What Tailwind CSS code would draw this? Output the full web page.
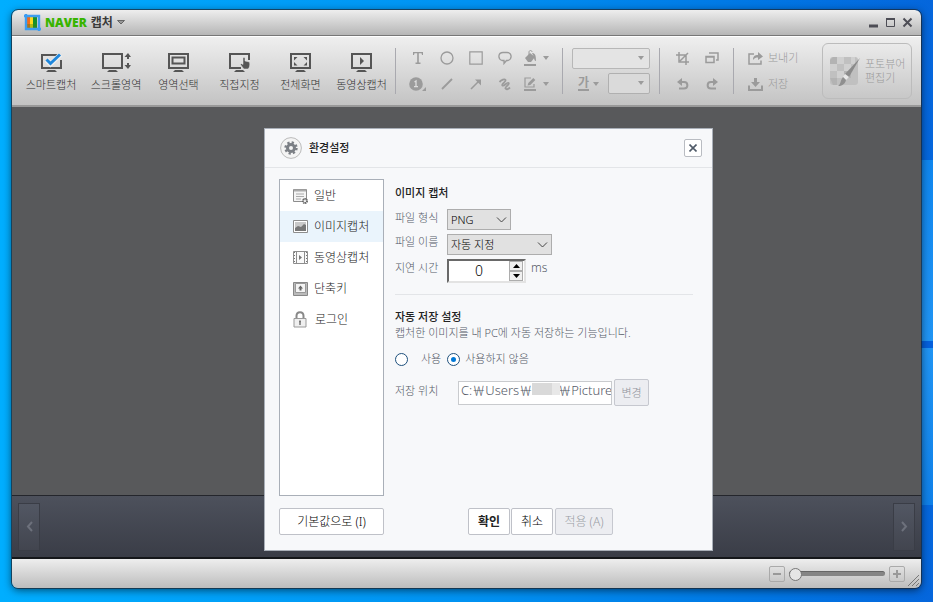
<!DOCTYPE html>
<html lang="ko">
<head>
  <meta charset="UTF-8" />
  <title>NAVER 캡처</title>
  <meta name="viewport" content="width=device-width, initial-scale=1.0" />
  <script src="https://cdn.jsdelivr.net/npm/@tailwindcss/browser@4"></script>
</head>
<body class="relative min-h-screen flex flex-col px-3 pt-2.5 pb-3.5 bg-linear-to-r from-[#00aeff] via-[#0092f2] to-[#0566dc] font-['Noto_Sans','Noto_Sans_CJK_KR',sans-serif] font-light text-[11px] leading-4">

  <!-- light beams of the wallpaper -->
  <div class="absolute right-0 top-0 bottom-0 w-6 flex flex-col">
    <div class="h-[160px]"></div>
    <div class="h-[181px] bg-linear-to-b from-[#0f86ee] to-[#2094f3]"></div>
    <div class="h-[7px] bg-[#0560dc]"></div>
    <div class="h-[157px] bg-linear-to-b from-[#2094f3] to-[#0f80e8]"></div>
  </div>

  <div class="relative flex-1 flex flex-col rounded-md shadow-[0_2px_8px_rgba(0,0,0,0.6)] outline outline-[#1c2a38]/70">

    <!-- title bar -->
    <header class="h-[26px] flex items-center pl-3 pr-2 rounded-t-md bg-linear-to-b from-[#eeeeee] to-[#b6b6b6] border-b border-[#777777]">
      <svg class="mr-1" width="17" height="17" viewBox="0 0 17 17">
        <rect x="3" y="3" width="4" height="11" fill="#f26a1b"/><rect x="6" y="3" width="4" height="11" fill="#ffd91c"/><rect x="9" y="3" width="4" height="11" fill="#16902b"/>
        <path d="M3 10h10v4H3z" fill="#3f8a10" opacity=".4"/>
        <path d="M2 0v15h15M0 2h15v15" fill="none" stroke="#3d9df0" stroke-width="2.4"/>
      </svg>
      <h1 class="flex items-center gap-1 text-xs">
        <span class="font-['Open_Sans',sans-serif] font-extrabold text-[#37b400]">NAVER</span>
        <span class="font-bold text-[#3a3a3a]">캡처</span>
      </h1>
      <button aria-label="메뉴" class="ml-1"><svg width="8" height="5" viewBox="0 0 8 5"><path d="M.5.5h7L4 4z" fill="#999" stroke="#666"/></svg></button>
      <div class="ml-auto flex items-center gap-1.5 text-[#4d4d55]">
        <button aria-label="최소화"><svg width="11" height="11" viewBox="0 0 11 11"><path d="M1 9h9" stroke="currentColor" stroke-width="3"/></svg></button>
        <button aria-label="최대화"><svg width="11" height="11" viewBox="0 0 11 11"><path d="M1.500 1v8.500h8V1" fill="none" stroke="currentColor"/><path d="M1 2h9" stroke="currentColor" stroke-width="2"/></svg></button>
        <button aria-label="닫기"><svg width="11" height="11" viewBox="0 0 11 11"><path d="M1.500 1.500l8 8M9.500 1.500l-8 8" stroke="currentColor" stroke-width="2"/></svg></button>
      </div>
    </header>

    <!-- toolbar -->
    <nav class="h-[71px] flex items-center pl-1.5 pr-[9px] bg-linear-to-b from-[#efefef] to-[#c3c3c3] border-t border-t-white border-b-2 border-b-[#999999]">
      <div class="flex pt-0.5 text-[#333333]">
        <button class="w-[66px] flex flex-col items-center gap-1">
          <svg width="23" height="21" viewBox="0 0 23 21" fill="none"><path d="M20 3H2v13h19V8" stroke="#555" stroke-width="2"/><path d="M6 20l2-2h7l2 2z" fill="#555"/><path d="M6.500 8l4 4 10-9.500" stroke="#eee" stroke-width="5"/><path d="M6.500 7.500l4 4L20 2.500" stroke="#1f87dc" stroke-width="3"/></svg>
          <span>스마트캡처</span>
        </button>
        <button class="w-16 flex flex-col items-center gap-1">
          <svg width="29" height="21" viewBox="0 0 29 21" fill="none"><path d="M1 2h19v14H1z" stroke="#555" stroke-width="2"/><path d="M5 20l2-2h7l2 2z" fill="#555"/><path d="M26 3v4M26 11v4" stroke="#555" stroke-width="2"/><path d="M22.500 5L26 1l3 4zM22.500 13L26 17l3-4z" fill="#555"/></svg>
          <span>스크롤영역</span>
        </button>
        <button class="w-[61px] flex flex-col items-center gap-1">
          <svg width="21" height="21" viewBox="0 0 21 21" fill="none"><path d="M1 2h19v14H1z" stroke="#555" stroke-width="2"/><path d="M4.500 5.500h12v6h-12z" stroke="#555" stroke-width="2"/><path d="M5 20l2-2h7l2 2z" fill="#555"/></svg>
          <span>영역선택</span>
        </button>
        <button class="w-[61px] flex flex-col items-center gap-1">
          <svg width="21" height="21" viewBox="0 0 21 21" fill="none"><path d="M20 8V2H1v14h11" stroke="#555" stroke-width="2"/><path d="M5 20l2-2h7l2 2z" fill="#555"/><path d="M14 6.500c0-1.500 2-1.500 2 0V9l4.500 1c.7 3 0 6-1.500 7h-4c-1-1-2-2.500-3.500-4.500 0-1.300 1.500-1 2.500 0z" fill="#555" stroke="#e4e4e4" stroke-width=".5"/></svg>
          <span>직접지정</span>
        </button>
        <button class="w-[61px] flex flex-col items-center gap-1">
          <svg width="21" height="21" viewBox="0 0 21 21" fill="none"><path d="M1 2h19v14H1z" stroke="#555" stroke-width="2"/><path d="M4 5h3.500L4 8.500zM17 5h-3.500L17 8.500zM4 13.500h3.500L4 10zM17 13.500h-3.500L17 10z" fill="#555"/><path d="M5 20l2-2h7l2 2z" fill="#555"/></svg>
          <span>전체화면</span>
        </button>
        <button class="w-[61px] flex flex-col items-center gap-1">
          <svg width="21" height="21" viewBox="0 0 21 21" fill="none"><path d="M1 2h19v14H1z" stroke="#555" stroke-width="2"/><path d="M9 5v8l4-4z" fill="#555"/><path d="M5 20l2-2h7l2 2z" fill="#555"/></svg>
          <span>동영상캡처</span>
        </button>
      </div>

      <div class="ml-[3px] w-px h-[46px] bg-[#a9a9af]"></div>

      <div class="ml-[7px] grid grid-cols-[repeat(4,29px)_35px] auto-rows-[26px] place-items-center text-[#9b9b9b]">
        <button disabled aria-label="텍스트"><svg width="12" height="12" viewBox="0 0 12 12"><path d="M1 0h10v3h-1L9.500 1.200H6.800V10.500h1.700V12h-5v-1.500h1.700V1.200H2.500L2 3H1z" fill="currentColor"/></svg></button>
        <button disabled aria-label="원"><svg width="14" height="14" viewBox="0 0 14 14" fill="none" stroke="currentColor" stroke-width="1.300"><circle cx="7" cy="7" r="6"/></svg></button>
        <button disabled aria-label="사각형"><svg width="14" height="14" viewBox="0 0 14 14" fill="none" stroke="currentColor" stroke-width="1.200"><path d="M.8.800h12.400v12.400H.8z"/></svg></button>
        <button disabled aria-label="말풍선"><svg width="14" height="14" viewBox="0 0 14 14" fill="none" stroke="currentColor" stroke-width="1.300"><path d="M4 9.500C-.5 8 0 1.500 5 1.500h4c5 0 5.500 6.500 1 8H8.500L6 12.500v-3z"/></svg></button>
        <button disabled aria-label="채우기" class="flex items-center gap-1.5"><svg width="13" height="16" viewBox="0 0 13 16"><path d="M1 8l5-5 5 4-4 5H4z" fill="currentColor"/><path d="M5 6V2c0-2 3-2 3 0" fill="none" stroke="currentColor"/><path d="M8 3c3 0 4 2 4 8-1.500 0-2-2-2-4z" fill="currentColor"/><path d="M0 15h12" stroke="currentColor" stroke-width="2"/></svg><svg width="6" height="4" viewBox="0 0 6 4"><path d="M0 0h6L3 4z" fill="currentColor"/></svg></button>
        <button disabled aria-label="번호"><svg width="17" height="14" viewBox="0 0 17 14"><circle cx="7" cy="7" r="6.800" fill="currentColor"/><path d="M5.500 5L7 4v5.500M5 9.700h4" fill="none" stroke="#ddd" stroke-width="1.300"/><path d="M17 10v4h-4z" fill="currentColor"/></svg></button>
        <button disabled aria-label="선"><svg width="12" height="12" viewBox="0 0 12 12"><path d="M1 11L11 1" stroke="currentColor" stroke-width="1.800"/></svg></button>
        <button disabled aria-label="화살표"><svg width="12" height="12" viewBox="0 0 12 12"><path d="M1 11l8-8" stroke="currentColor" stroke-width="1.600"/><path d="M5 1.500h6v6L9 5.500 7 3.500z" fill="currentColor"/></svg></button>
        <button disabled aria-label="자유선"><svg width="14" height="13" viewBox="0 0 14 13" fill="none" stroke="currentColor" stroke-width="1.800"><path d="M1.500 4C3.500 2 6.500.5 7.500 2S3 6 4.500 7.500 9 3.500 10.500 5 6.500 9 7.500 10.500s3 .5 4.500-1"/></svg></button>
        <button disabled aria-label="선 색" class="flex items-center gap-1.5"><svg width="13" height="14" viewBox="0 0 13 14"><path d="M7 1H1v9h9V7" fill="none" stroke="currentColor" stroke-width="1.200"/><path d="M3.500 8.500l.8-2.500 5-5 2 2-5 5z" fill="currentColor"/><path d="M0 13h12" stroke="currentColor" stroke-width="2"/></svg><svg width="6" height="4" viewBox="0 0 6 4"><path d="M0 0h6L3 4z" fill="currentColor"/></svg></button>
      </div>

      <div class="ml-2 w-px h-[46px] bg-[#a9a9af]"></div>

      <div class="ml-[9px] w-[78px] flex flex-col gap-1 text-[#9b9b9b]">
        <div class="relative">
          <select disabled aria-label="글꼴" class="block appearance-none w-full h-[21px] rounded-xs border border-[#b7b7b7] bg-[#e4e4e4]"><option></option></select>
          <svg class="absolute right-1.5 top-2" width="6" height="4" viewBox="0 0 6 4"><path d="M0 0h6L3 4z" fill="currentColor"/></svg>
        </div>
        <div class="flex items-center justify-between">
          <button disabled aria-label="글자 색" class="ml-1.5 flex items-center gap-1"><span class="border-b-2 leading-3 text-xs font-bold">가</span><svg width="6" height="4" viewBox="0 0 6 4"><path d="M0 0h6L3 4z" fill="currentColor"/></svg></button>
          <div class="relative">
            <select disabled aria-label="글자 크기" class="block appearance-none w-[42px] h-[21px] rounded-xs border border-[#b0b0b0] bg-[#dadada]"><option></option></select>
            <svg class="absolute right-1.5 top-2" width="6" height="4" viewBox="0 0 6 4"><path d="M0 0h6L3 4z" fill="currentColor"/></svg>
          </div>
        </div>
      </div>

      <div class="ml-[9px] w-px h-[46px] bg-[#a9a9af]"></div>

      <div class="ml-2 grid grid-cols-[29px_29px] auto-rows-[26px] place-items-center text-[#9b9b9b]">
        <button disabled aria-label="자르기"><svg width="13" height="13" viewBox="0 0 13 13" fill="none" stroke="currentColor" stroke-width="1.500"><path d="M3 0v10h10M0 3h10v10M4 9l8-8"/></svg></button>
        <button disabled aria-label="크기 조절"><svg width="14" height="12" viewBox="0 0 14 12" fill="none" stroke="currentColor" stroke-width="1.500"><path d="M1 4.500h8v6H1zM4 1h9v7h-2M1 5h8"/></svg></button>
        <button disabled aria-label="실행 취소"><svg width="12" height="12" viewBox="0 0 12 12"><path d="M3 4h4c4.500 0 4.500 6.500 0 6.500H2" fill="none" stroke="currentColor" stroke-width="2"/><path d="M5 0v8L0 4z" fill="currentColor"/></svg></button>
        <button disabled aria-label="다시 실행"><svg width="12" height="12" viewBox="0 0 12 12"><path d="M9 4H5C.5 4 .5 10.500 5 10.500h5" fill="none" stroke="currentColor" stroke-width="2"/><path d="M7 0v8l5-4z" fill="currentColor"/></svg></button>
      </div>

      <div class="ml-[7px] w-px h-[46px] bg-[#a9a9af]"></div>

      <div class="ml-3.5 grid auto-rows-[26px] text-[#9b9b9b]">
        <button disabled class="flex items-center gap-[5px]"><svg width="15" height="13" viewBox="0 0 15 13"><path d="M6 2H1v10h12V8.500" fill="none" stroke="currentColor" stroke-width="1.500"/><path d="M5 8c0-4 2-5 5-5V0l5 4.500L10 8V5.500C8 5.500 6.500 6 5 8z" fill="currentColor"/></svg>보내기</button>
        <button disabled class="flex items-center gap-[5px]"><svg width="15" height="13" viewBox="0 0 15 13"><path d="M1 7.500V12h13V7.500" fill="none" stroke="currentColor" stroke-width="2"/><path d="M6 0h3v4h3L7.500 9 3 4h3z" fill="currentColor"/></svg>저장</button>
      </div>

      <button disabled class="ml-auto w-[90px] h-14 flex items-center gap-1 pl-1.5 rounded-md border border-[#bcbcbc] text-left leading-3.5 text-[#9b9b9b]">
        <svg class="shrink-0" width="32" height="32" viewBox="0 0 32 32">
          <rect x="1" y="2" width="28" height="28" rx="3" fill="#c0c0c0"/>
          <path d="M8 2h7v7H8zM22 2h4v7h-4zM1 9h7v7H1zM15 9h7v7h-7zM8 16h7v7H8z" fill="#d0d0d0"/>
          <path d="M4 2h4v7H1V5zM15 16h7v7h-7zM1 23h7v7H4z" fill="#b3b3b3"/>
          <path d="M31 3L20 22l-4-3z" fill="#8b8b8b"/><path d="M16 19l4 3-3 3-3-3z" fill="#e8e8e8"/><path d="M14 22l3 3c-1 4-4 6-8 6 3-2 2-5 5-9z" fill="#8f8f8f"/>
        </svg>
        <span>포토뷰어<br />편집기</span>
      </button>
    </nav>

    <main class="flex-1 bg-[#58595b]"></main>

    <!-- thumbnail strip -->
    <section class="h-16 flex items-center justify-between px-1.5 border-t border-b-2 border-t-[#24262c] border-b-[#15171a] bg-linear-to-b from-[#4d515c] to-[#3a3d47]">
      <button disabled aria-label="이전" class="w-[22px] h-12 flex items-center justify-center border border-[#3a3d46] bg-linear-to-b from-[#525763] to-[#42454f]"><svg width="7" height="11" viewBox="0 0 7 11" fill="none" stroke="#6d717c" stroke-width="2"><path d="M6 1L2 5.500 6 10"/></svg></button>
      <button disabled aria-label="다음" class="w-[22px] h-12 flex items-center justify-center border border-[#3a3d46] bg-linear-to-b from-[#525763] to-[#42454f]"><svg width="7" height="11" viewBox="0 0 7 11" fill="none" stroke="#6d717c" stroke-width="2"><path d="M1 1l4 4.500L1 10"/></svg></button>
    </section>

    <!-- status bar -->
    <footer class="relative h-[29px] flex items-center justify-end gap-1 pr-4 rounded-b-md bg-linear-to-b from-[#eeeeee] to-[#bdbdbd]">
      <button disabled aria-label="축소" class="size-4 flex items-center justify-center rounded-xs border border-[#aaaaaa]"><svg width="8" height="8" viewBox="0 0 8 8"><path d="M0 4h8" stroke="#999" stroke-width="2"/></svg></button>
      <input type="range" min="0" max="100" value="0" aria-label="확대 비율" class="appearance-none w-24 h-[5px] rounded-full bg-[#858585] border-t border-[#666666] [&::-webkit-slider-thumb]:appearance-none [&::-webkit-slider-thumb]:size-[13px] [&::-webkit-slider-thumb]:rounded-full [&::-webkit-slider-thumb]:border [&::-webkit-slider-thumb]:border-[#777777] [&::-webkit-slider-thumb]:bg-[#e6e6e6]" />
      <button disabled aria-label="확대" class="size-4 flex items-center justify-center rounded-xs border border-[#aaaaaa]"><svg width="8" height="8" viewBox="0 0 8 8"><path d="M0 4h8M4 0v8" stroke="#999" stroke-width="2"/></svg></button>
      <svg class="absolute right-0.5 bottom-0.5" width="11" height="11" viewBox="0 0 11 11" stroke="#777" fill="none"><path d="M0 11L11 0M4 11l7-7M8 11l3-3"/></svg>
    </footer>

    <!-- settings dialog -->
    <div role="dialog" aria-labelledby="dialogTitle" class="absolute left-[252px] top-[118px] w-[449px] border border-[#a9afb8] bg-[#f7f8fa] text-[#555a68]">
      <div class="h-[39px] flex items-center pl-[15px] pr-2.5 border-b border-[#e3e5e8]">
        <svg width="22" height="22" viewBox="0 0 22 22">
          <circle cx="11" cy="11" r="10.400" fill="#f4f4f4" stroke="#bbb"/>
          <circle cx="11" cy="11" r="5.500" fill="none" stroke="#7b7f85" stroke-width="2.400" stroke-dasharray="2.200 2.120"/>
          <circle cx="11" cy="11" r="3.500" fill="none" stroke="#7b7f85" stroke-width="3"/>
        </svg>
        <h2 id="dialogTitle" class="ml-[7px] font-medium text-[#222222]">환경설정</h2>
        <button aria-label="닫기" class="ml-auto size-[18px] flex items-center justify-center rounded-xs border border-[#b9bcc2] bg-white"><svg width="8" height="8" viewBox="0 0 8 8"><path d="M.5.500l7 7M7.500.500l-7 7" stroke="#4f5a68" stroke-width="1.600"/></svg></button>
      </div>

      <div class="flex pt-[11px] pl-3.5 pr-[19px]">
        <ul class="w-[105px] h-[317px] border border-[#a9afb8] bg-white text-xs text-[#222222]">
          <li><button class="w-full h-[31px] flex items-center gap-1.5 pl-[13px]"><svg width="15" height="16" viewBox="0 0 15 16"><path d="M.5 1.500h13v12H.5z" fill="#f4f4f4" stroke="#8d8d8d"/><path d="M1 2.500h12" stroke="#aaa" stroke-width="2"/><path d="M3 6h8M3 8.500h8M3 11h5" stroke="#aaa"/><circle cx="12" cy="13" r="2" fill="#fff" stroke="#666" stroke-width="2" stroke-dasharray="1.200 .4"/></svg>일반</button></li>
          <li><button class="w-full h-[31px] flex items-center gap-1.5 pl-[13px] bg-[#eaf4fc]"><svg width="15" height="13" viewBox="0 0 15 13"><path d="M.5.500h14v12H.5z" fill="#fff" stroke="#8d8d8d"/><path d="M2 2h11v9H2z" fill="#c9c9c9"/><path d="M2 8l3-2 3 1 3-3 2 1v6H2z" fill="#777"/></svg>이미지캡처</button></li>
          <li><button class="w-full h-[31px] flex items-center gap-1.5 pl-[13px]"><svg width="15" height="13" viewBox="0 0 15 13"><path d="M.5.500h14v12H.5zM3.500.500v12M11.500.500v12" fill="#fafafa" stroke="#8d8d8d"/><path d="M1.500 1v12M13.500 1v12" stroke="#777" stroke-dasharray="1 2"/><path d="M6 4v5l3-2.500z" fill="#777"/></svg>동영상캡처</button></li>
          <li><button class="w-full h-[31px] flex items-center gap-1.5 pl-[13px]"><svg width="15" height="14" viewBox="0 0 15 14"><path d="M.5.500h14v13H.5z" fill="#bbb" stroke="#888"/><path d="M2.500 1.500h10v9h-10z" fill="#f4f4f4" stroke="#999"/><path d="M7.500 3.500L10 6.500H8.500v2h-2v-2H5z" fill="#666"/></svg>단축키</button></li>
          <li><button class="w-full h-[31px] flex items-center gap-2 pl-[13px]"><svg width="14" height="17" viewBox="0 0 14 17"><path d="M3.500 8V5c0-5 7-5 7 0v3" fill="none" stroke="#888" stroke-width="2"/><path d="M1 7.500h12v8.500H1z" fill="#efefef" stroke="#999"/><path d="M7 9.500V14M6 10.500h2" stroke="#777" stroke-width="1.500"/></svg>로그인</button></li>
        </ul>

        <div class="flex-1 ml-[11px]">
          <h3 class="pt-1.5 font-medium text-[#222222]">이미지 캡처</h3>
          <div class="flex flex-col gap-1 pt-2">
            <div class="flex">
              <label for="fileType" class="w-[52px] pt-px">파일 형식</label>
              <div class="relative">
                <select id="fileType" class="block appearance-none w-16 h-[21px] pl-[3px] border border-[#adadad] bg-[#e1e1e1] text-black"><option>PNG</option></select>
                <svg class="absolute right-1 top-2" width="11" height="6" viewBox="0 0 11 6" fill="none" stroke="#444"><path d="M1 .5l4.500 4.500L10 .5"/></svg>
              </div>
            </div>
            <div class="flex">
              <label for="fileName" class="w-[52px]">파일 이름</label>
              <div class="relative">
                <select id="fileName" class="block appearance-none w-[105px] h-[21px] pl-[3px] border border-[#adadad] bg-[#e1e1e1] text-black"><option>자동 지정</option></select>
                <svg class="absolute right-1 top-2" width="11" height="6" viewBox="0 0 11 6" fill="none" stroke="#444"><path d="M1 .5l4.500 4.500L10 .5"/></svg>
              </div>
            </div>
            <div class="flex">
              <label for="delay" class="w-[52px] pt-px">지연 시간</label>
              <div class="flex w-[79px] h-6 border-2 border-t-[#696969] border-l-[#696969] border-b-[#e3e3e3] border-r-[#e3e3e3] bg-white">
                <input id="delay" type="text" inputmode="numeric" value="0" class="w-[60px] h-5 text-center text-sm text-black" />
                <div class="flex flex-col">
                  <button aria-label="증가" class="w-3.5 h-2.5 flex items-center justify-center border border-[#adadad] bg-[#f0f0f0]"><svg width="7" height="4" viewBox="0 0 7 4"><path d="M0 4h7L3.500 0z"/></svg></button>
                  <button aria-label="감소" class="w-3.5 h-2.5 flex items-center justify-center border border-[#adadad] bg-[#f0f0f0]"><svg width="7" height="4" viewBox="0 0 7 4"><path d="M0 0h7L3.500 4z"/></svg></button>
                </div>
              </div>
              <span class="ml-[5px] pt-px text-xs">ms</span>
            </div>
          </div>

          <hr class="mt-[11px] border-[#e3e5e8]" />

          <h3 class="pt-3.5 font-medium text-[#222222]">자동 저장 설정</h3>
          <p>캡처한 이미지를 내 PC에 자동 저장하는 기능입니다.</p>
          <div class="flex items-center pt-2.5">
            <input id="autoOn" type="radio" name="autoSave" class="appearance-none size-[13px] rounded-full border border-[#1d4f7c] bg-white checked:border-4 checked:border-white checked:bg-[#0078d7] checked:outline checked:outline-[#1d4f7c] checked:-outline-offset-1" />
            <label for="autoOn" class="ml-[13px] mr-1.5">사용</label>
            <input id="autoOff" type="radio" name="autoSave" checked class="appearance-none size-[13px] rounded-full border border-[#1d4f7c] bg-white checked:border-4 checked:border-white checked:bg-[#0078d7] checked:outline checked:outline-[#1d4f7c] checked:-outline-offset-1" />
            <label for="autoOff" class="ml-[5px]">사용하지 않음</label>
          </div>
          <div class="flex items-center pt-3">
            <label for="savePath" class="w-[63px] pb-1">저장 위치</label>
            <div class="relative">
              <input id="savePath" type="text" value="C:￦Users￦&emsp;&emsp;￦Pictures" class="block w-[154px] h-6 pl-0.5 pb-1.5 border border-[#c9cbce] bg-white text-[13px]" />
              <div class="absolute left-[74px] top-0.5 flex h-3"><div class="w-5 bg-[#d9d9d9]"></div><div class="w-2 bg-[#e8e8e8]"></div></div>
            </div>
            <button disabled class="ml-0.5 w-[35px] h-[27px] rounded-xs border border-[#c6c8cf] bg-[#ecedf1] text-[#8f929a]">변경</button>
          </div>
        </div>
      </div>

      <div class="flex gap-px pt-3 pb-[15px] pl-3.5 text-xs text-black">
        <button class="w-[105px] h-[27px] mr-[83px] rounded-xs border border-[#bfc1c8] bg-white">기본값으로 (I)</button>
        <button class="w-[42px] h-[27px] rounded-xs border border-[#bfc1c8] bg-white font-bold text-[#222222]">확인</button>
        <button class="w-[42px] h-[27px] rounded-xs border border-[#bfc1c8] bg-white">취소</button>
        <button disabled class="w-[58px] h-[27px] ml-px rounded-xs border border-[#c6c8cf] bg-[#ecedf1] text-[#9a9da5]">적용 (A)</button>
      </div>
    </div>
  </div>
</body>
</html>
